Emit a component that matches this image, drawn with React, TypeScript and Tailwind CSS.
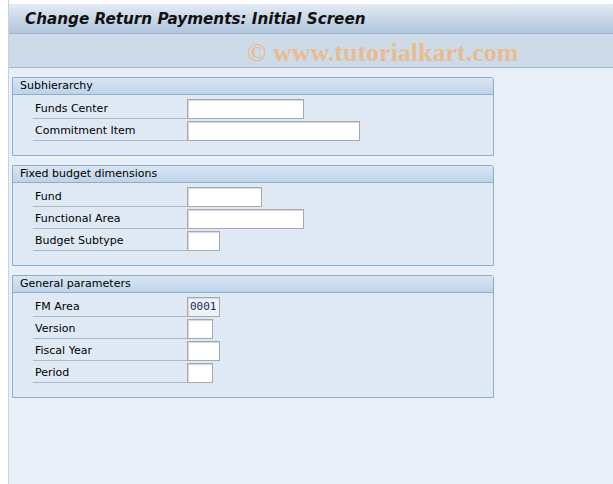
import React from "react";

const font = { fontFamily: "Tahoma, 'DejaVu Sans', sans-serif" };

type Row = { label: string; w: number; value?: string; grey?: boolean };

function Field({ label, w, value, grey }: Row) {
  return (
    <div className="flex h-[22px] items-start">
      <div className="ml-[20px] flex h-[20px] w-[154px] items-end border-b border-[#a9b9c9] pb-[2px] pl-[2px] text-[11px] leading-[14px] text-black">
        {label}
      </div>
      <div
        className={`h-[20px] border border-[#a3a9b1] shadow-[inset_1px_1px_0_#d6d9dd] ${grey ? "bg-[#eef1f5]" : "bg-white"} flex items-center pl-[2px] text-[11px] text-[#1a2a5a]`}
        style={{ width: w, fontFamily: "'DejaVu Sans Mono', monospace" }}
      >
        {value}
      </div>
    </div>
  );
}

function Group({ title, rows }: { title: string; rows: Row[] }) {
  return (
    <div className="w-[482px] rounded-tr-[3px] border border-[#8badce] bg-[#dfe9f4]">
      <div className="flex h-[17px] items-center border-b border-[#8badce] bg-gradient-to-b from-[#dae6f2] to-[#bdd3e9] pl-[7px] text-[11px] text-black">
        {title}
      </div>
      <div className="pt-[4px] pb-[12px]">
        {rows.map((r) => (
          <Field key={r.label} {...r} />
        ))}
      </div>
    </div>
  );
}

export default function App() {
  return (
    <div className="flex h-[484px] w-[613px] overflow-hidden bg-white" style={font}>
      <div className="w-[8px] shrink-0 bg-white" />
      <div className="flex flex-1 flex-col border-l border-[#c8d2dd] pt-[4px]">
        <div className="flex h-[30px] items-center border-b border-[#9fb6ce] bg-gradient-to-b from-[#e2ebf4] to-[#b0c5dc] pl-[16px] pt-[2px]">
          <span className="text-[15.2px] font-bold italic text-[#111]">Change Return Payments: Initial Screen</span>
        </div>
        <div className="relative h-[34px] border-b border-[#a3b8cd] bg-[#cddbe8]">
          <span
            className="absolute left-[238px] top-[3px] text-[26px] font-bold leading-[32px] text-[#e9bb90]"
            style={{ fontFamily: "'Liberation Serif', serif" }}
          >
            © www.tutorialkart.com
          </span>
        </div>
        <div className="flex flex-1 flex-col gap-[9px] bg-[#e8eff7] pl-[3px] pt-[9px]">
          <Group
            title="Subhierarchy"
            rows={[
              { label: "Funds Center", w: 117 },
              { label: "Commitment Item", w: 173 },
            ]}
          />
          <Group
            title="Fixed budget dimensions"
            rows={[
              { label: "Fund", w: 75 },
              { label: "Functional Area", w: 117 },
              { label: "Budget Subtype", w: 33 },
            ]}
          />
          <Group
            title="General parameters"
            rows={[
              { label: "FM Area", w: 33, value: "0001", grey: true },
              { label: "Version", w: 26 },
              { label: "Fiscal Year", w: 33 },
              { label: "Period", w: 26 },
            ]}
          />
        </div>
      </div>
    </div>
  );
}
